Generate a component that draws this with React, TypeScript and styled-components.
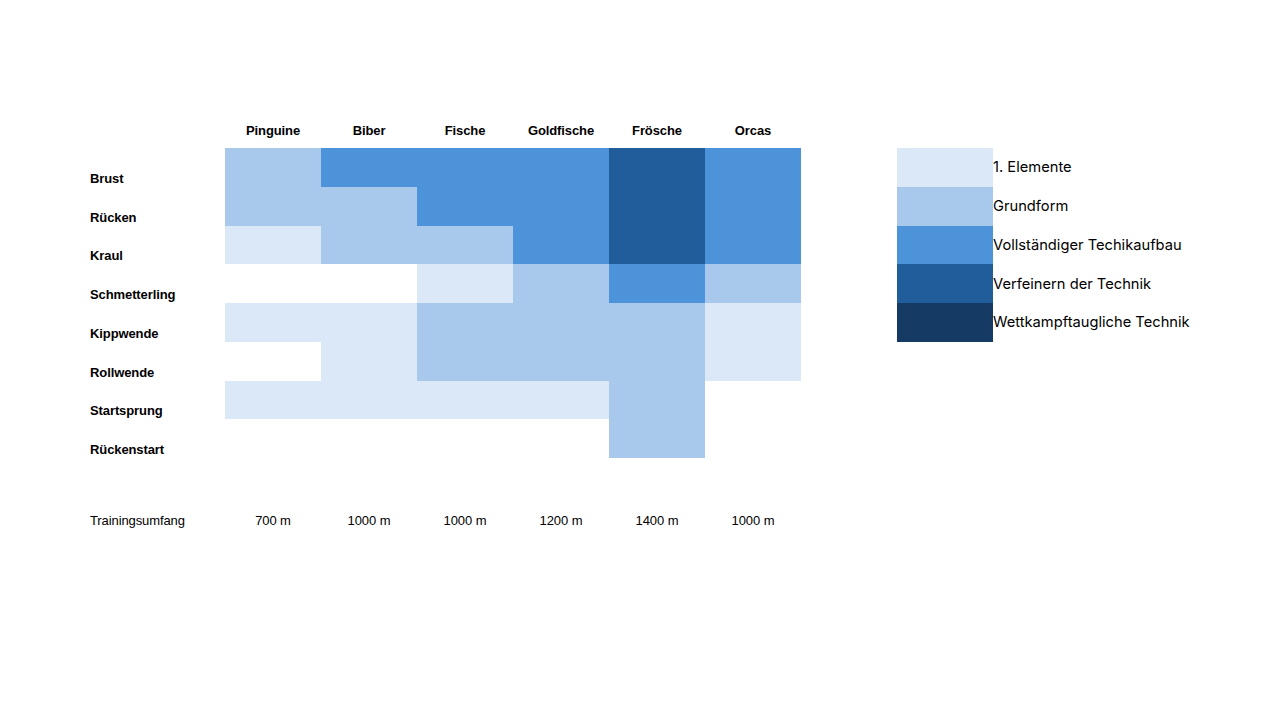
import React from 'react'
import styled, { createGlobalStyle } from 'styled-components'

const COLORS = ['transparent', '#dae8f7', '#a8c9ec', '#4d93da', '#215c9b', '#153b65']

const GROUPS = ['Pinguine', 'Biber', 'Fische', 'Goldfische', 'Frösche', 'Orcas']

const SKILLS: { name: string; levels: number[] }[] = [
  { name: 'Brust', levels: [2, 3, 3, 3, 4, 3] },
  { name: 'Rücken', levels: [2, 2, 3, 3, 4, 3] },
  { name: 'Kraul', levels: [1, 2, 2, 3, 4, 3] },
  { name: 'Schmetterling', levels: [0, 0, 1, 2, 3, 2] },
  { name: 'Kippwende', levels: [1, 1, 2, 2, 2, 1] },
  { name: 'Rollwende', levels: [0, 1, 2, 2, 2, 1] },
  { name: 'Startsprung', levels: [1, 1, 1, 1, 2, 0] },
  { name: 'Rückenstart', levels: [0, 0, 0, 0, 2, 0] },
]

const VOLUME = ['700 m', '1000 m', '1000 m', '1200 m', '1400 m', '1000 m']

const LEGEND = [
  '1. Elemente',
  'Grundform',
  'Vollständiger Techikaufbau',
  'Verfeinern der Technik',
  'Wettkampftaugliche Technik',
]

const GlobalStyle = createGlobalStyle`
  html, body {
    margin: 0;
    padding: 0;
    background: #ffffff;
  }
  body {
    width: 1280px;
    height: 720px;
    overflow: hidden;
    color: #000000;
  }
`

const Page = styled.div`
  display: flex;
  align-items: flex-start;
  gap: 96px;
  padding: 113px 0 0 90px;
`

const Table = styled.div`
  display: grid;
  grid-template-columns: 135px repeat(6, 96px);
  grid-template-rows: 35px repeat(8, 38.75px) 42.75px 38.75px;
  font-family: 'Liberation Sans', Arial, sans-serif;
  font-size: 13px;
  letter-spacing: -0.1px;
`

const HeaderCell = styled.div`
  display: flex;
  align-items: center;
  justify-content: center;
  font-weight: 700;
`

const RowLabel = styled.div`
  display: flex;
  align-items: flex-end;
  font-weight: 700;
  line-height: 17px;
`

const Cell = styled.div<{ $level: number }>`
  background: ${(p) => COLORS[p.$level]};
`

const Spacer = styled.div`
  grid-column: 1 / -1;
`

const VolumeLabel = styled.div`
  display: flex;
  align-items: center;
`

const VolumeCell = styled.div`
  display: flex;
  align-items: center;
  justify-content: center;
`

const Legend = styled.div`
  display: flex;
  flex-direction: column;
  margin-top: 35px;
  font-family: Inter, 'Noto Sans', sans-serif;
  font-size: 14.7px;
`

const LegendRow = styled.div`
  display: flex;
  align-items: center;
  height: 38.75px;
`

const Swatch = styled.div<{ $level: number }>`
  width: 96px;
  height: 100%;
  background: ${(p) => COLORS[p.$level]};
`

export default function App() {
  return (
    <>
      <GlobalStyle />
      <Page>
        <Table>
          <div />
          {GROUPS.map((g) => (
            <HeaderCell key={g}>{g}</HeaderCell>
          ))}
          {SKILLS.map((s) => (
            <React.Fragment key={s.name}>
              <RowLabel>{s.name}</RowLabel>
              {s.levels.map((lvl, i) => (
                <Cell key={i} $level={lvl} />
              ))}
            </React.Fragment>
          ))}
          <Spacer />
          <VolumeLabel>Trainingsumfang</VolumeLabel>
          {VOLUME.map((v, i) => (
            <VolumeCell key={i}>{v}</VolumeCell>
          ))}
        </Table>
        <Legend>
          {LEGEND.map((label, i) => (
            <LegendRow key={label}>
              <Swatch $level={i + 1} />
              {label}
            </LegendRow>
          ))}
        </Legend>
      </Page>
    </>
  )
}
